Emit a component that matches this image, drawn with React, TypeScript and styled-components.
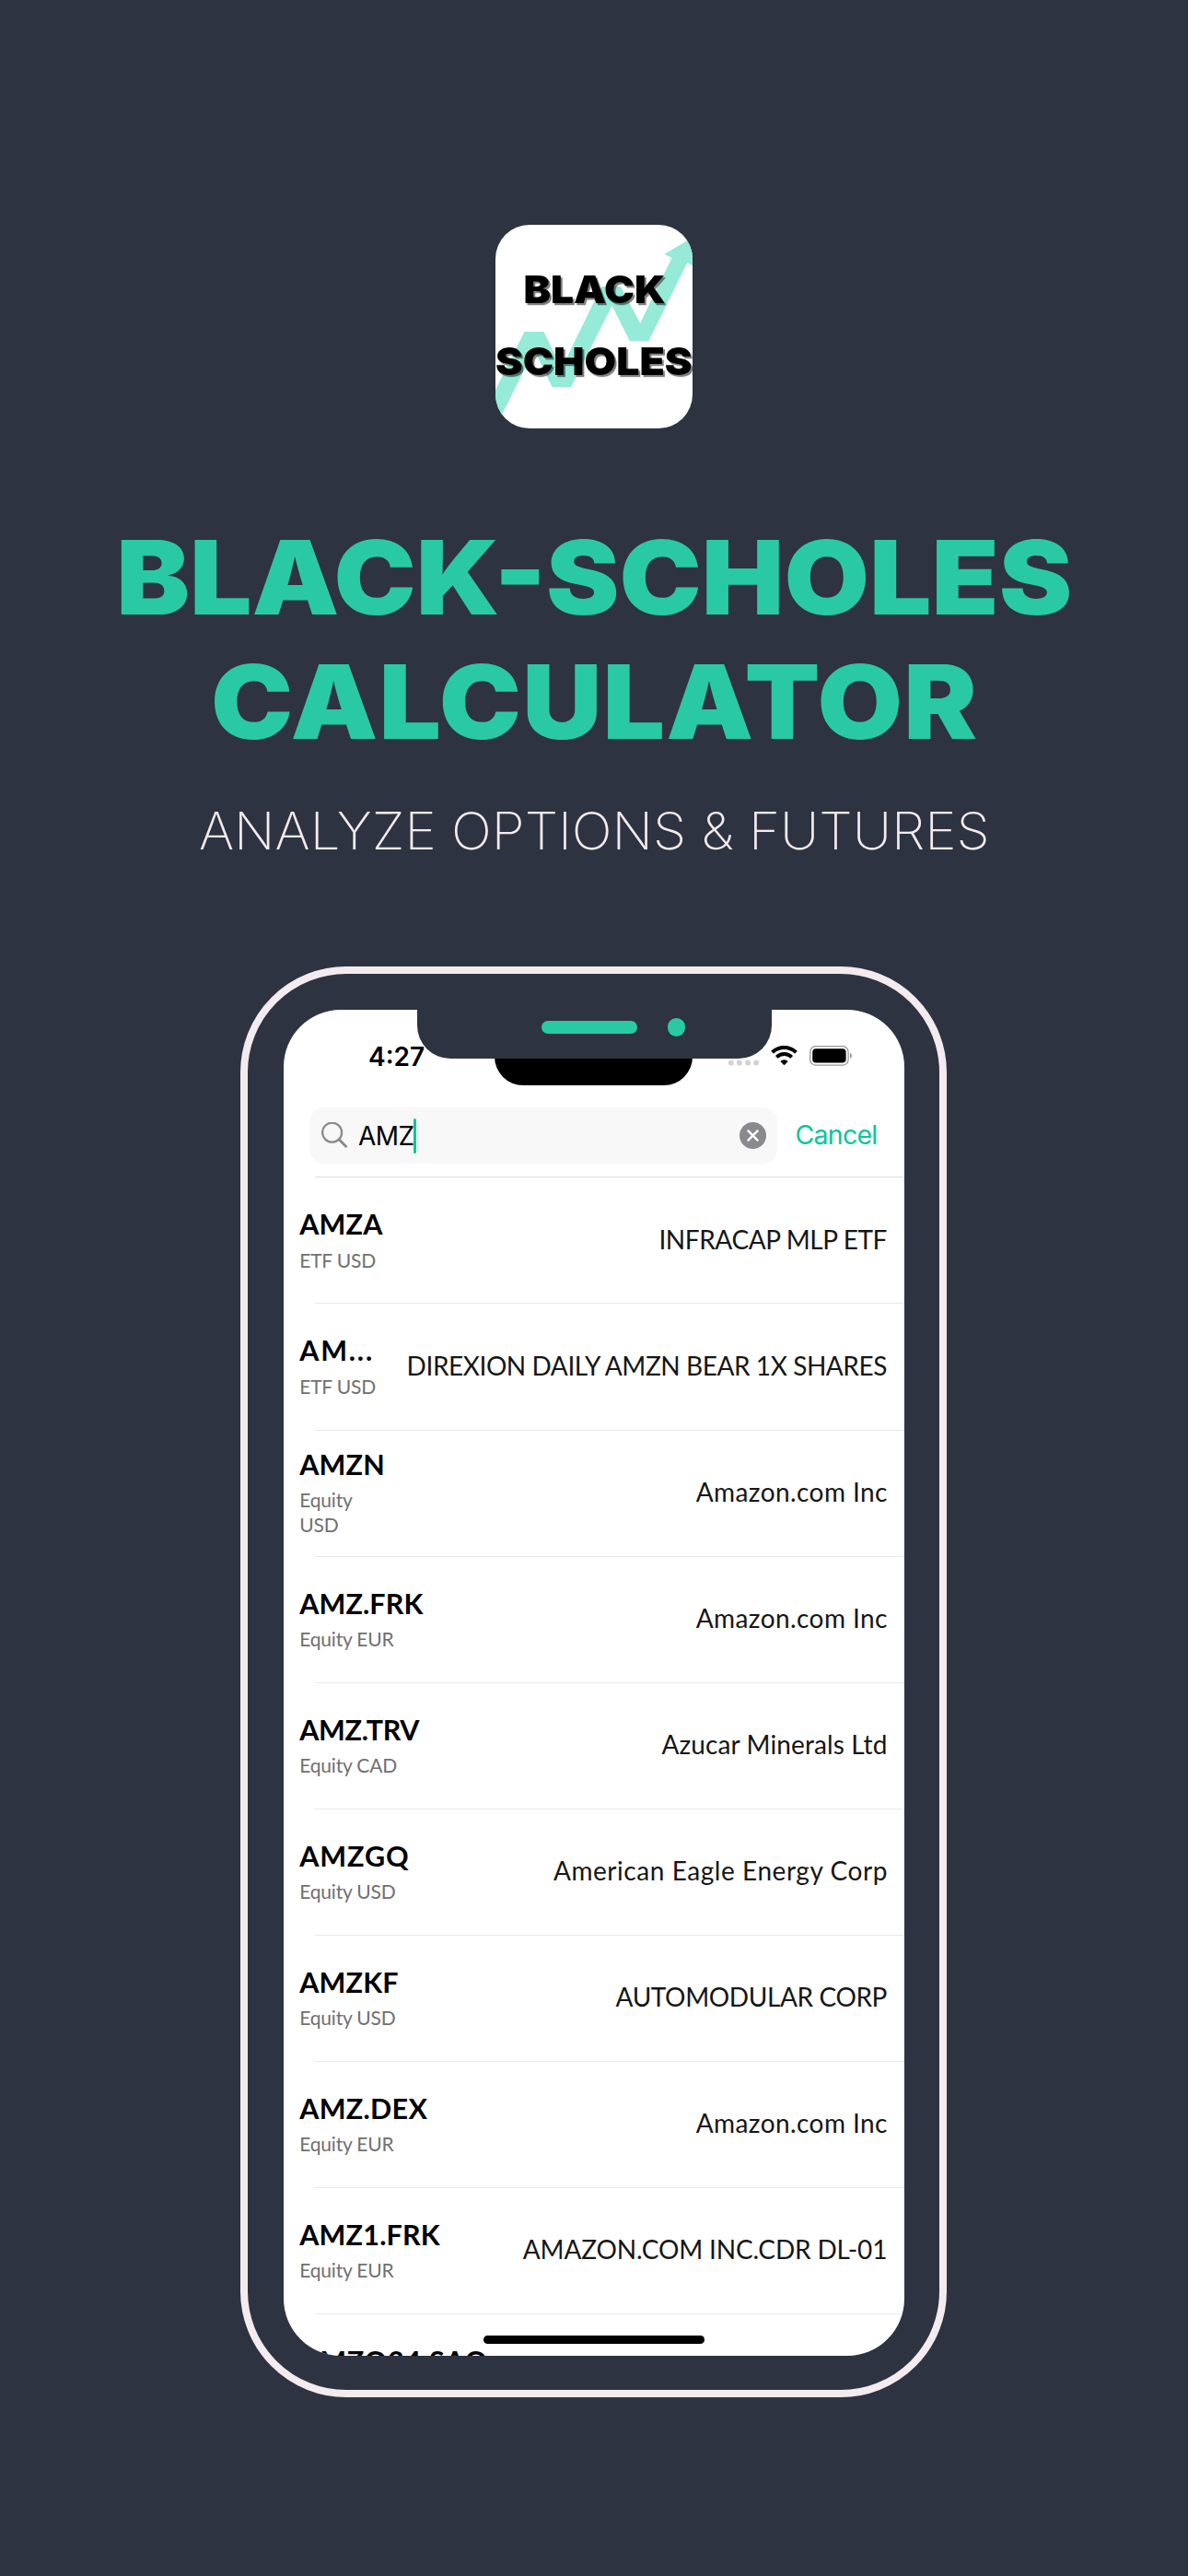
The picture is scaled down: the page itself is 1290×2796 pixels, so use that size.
import React from "react";
import styled, { createGlobalStyle } from "styled-components";

const INK = "#2e3341";
const MINT = "#2ac9a5";
const ACCENT = "#0ac69a";
const DISPLAY = `Inter, "Liberation Sans", sans-serif`;
const BODY = `Lato, "Liberation Sans", sans-serif`;

const GlobalStyle = createGlobalStyle`
  html, body { margin: 0; padding: 0; background: ${INK}; }
  * { box-sizing: border-box; }
`;

const Page = styled.main`
  display: flex;
  flex-direction: column;
  align-items: center;
  width: 1290px;
  height: 2796px;
  padding-top: 244px;
  overflow: hidden;
  background: ${INK};
  font-family: ${DISPLAY};
`;

const AppIcon = styled.svg`
  display: block;
  flex: none;
  width: 213.5px;
  height: 220.5px;
  border-radius: 37px;
  background: #fff;
`;

const Title = styled.h1`
  display: flex;
  flex-direction: column;
  align-items: center;
  margin: 94.5px 0 0 1px;
  color: ${MINT};
  font-size: 111.4px;
  font-weight: 900;
  line-height: 135px;
  white-space: nowrap;
`;

const TitleLine = styled.span<{ $tracking: number }>`
  letter-spacing: ${(p) => p.$tracking}px;
  transform: scaleX(1.072);
`;

const Subtitle = styled.p`
  margin: 39.1px 0 0;
  color: #f4ebee;
  font-size: 55.4px;
  font-weight: 200;
  line-height: 67px;
  white-space: nowrap;
  transform: scaleX(1.049);
`;

const Phone = styled.section`
  flex: none;
  align-self: flex-start;
  display: flex;
  width: 767px;
  height: 1552.5px;
  margin: 114.2px 0 0 261px;
  padding: 39px 38px 36.5px 39px;
  border: 8px solid #f4ebee;
  border-radius: 115px;
`;

const Screen = styled.div`
  position: relative;
  flex: 1;
  display: flex;
  flex-direction: column;
  overflow: hidden;
  border-radius: 62px;
  background: #fff;
`;

const BlackNotch = styled.div`
  position: absolute;
  top: 0;
  left: 229px;
  width: 214.5px;
  height: 82px;
  border-radius: 0 0 31px 31px;
  background: #000;
`;

const Notch = styled.div`
  position: absolute;
  top: -1px;
  left: 145px;
  display: flex;
  align-items: center;
  gap: 33px;
  width: 385.3px;
  height: 53.3px;
  padding: 0 0 14px 135px;
  border-radius: 0 0 36px 36px;
  background: ${INK};
`;

const Speaker = styled.div`
  width: 104px;
  height: 13.3px;
  border-radius: 7px;
  background: ${MINT};
`;

const Camera = styled.div`
  width: 19.3px;
  height: 19.3px;
  border-radius: 50%;
  background: ${MINT};
`;

const StatusBar = styled.header`
  flex: none;
  display: flex;
  align-items: flex-end;
  justify-content: space-between;
  height: 106px;
  padding: 0 56px 45px 92px;
`;

const Clock = styled.span`
  color: #000;
  font-size: 28px;
  font-weight: 600;
  line-height: 20px;
`;

const StatusIcons = styled.svg`
  display: block;
  width: 136px;
  height: 24px;
`;

const SearchRow = styled.div`
  flex: none;
  display: flex;
  align-items: center;
  height: 61px;
  padding-left: 28px;
  gap: 19.5px;
`;

const SearchField = styled.div`
  display: flex;
  align-items: center;
  width: 508px;
  height: 61px;
  padding: 0 12px 0 13px;
  border-radius: 16px;
  background: #f8f8f8;
`;

const FieldIcon = styled.svg`
  display: block;
  flex: none;
  width: 29px;
  height: 29px;
`;

const Query = styled.span`
  margin-left: 11px;
  color: #000;
  font-size: 28px;
  line-height: 38px;
  letter-spacing: -0.5px;
`;

const Caret = styled.span`
  flex: none;
  width: 3px;
  height: 38px;
  margin: 0 auto 0 -0.5px;
  border-radius: 1.5px;
  background: ${ACCENT};
`;

const Cancel = styled.span`
  color: ${ACCENT};
  font-size: 28.5px;
  line-height: 36px;
  letter-spacing: -0.75px;
  padding-bottom: 2px;
`;

const List = styled.div`
  flex: none;
  display: flex;
  flex-direction: column;
  margin-top: 14px;
`;

const Divider = styled.div<{ $tone: string }>`
  flex: none;
  height: 1px;
  margin-left: 34px;
  background: ${(p) => p.$tone};
`;

const Row = styled.div`
  flex: none;
  display: flex;
  align-items: center;
  justify-content: space-between;
  height: 136.12px;
  padding: 0.4px 18.6px 0 17.2px;
  font-family: ${BODY};
  white-space: nowrap;
`;

const Ticker = styled.div`
  display: flex;
  flex-direction: column;
  gap: 8.7px;
`;

const Symbol = styled.span<{ $tracking: number }>`
  color: #000;
  font-size: 30.5px;
  font-weight: 700;
  line-height: 32.6px;
  letter-spacing: ${(p) => p.$tracking}px;
`;

const Kind = styled.span<{ $narrow?: boolean }>`
  width: ${(p) => (p.$narrow ? "84px" : "auto")};
  white-space: ${(p) => (p.$narrow ? "normal" : "nowrap")};
  color: #707070;
  font-size: 21px;
  line-height: 27.3px;
  letter-spacing: -0.18px;
`;

const Company = styled.span<{ $tracking: number }>`
  padding-bottom: 4px;
  color: #161616;
  font-size: 28px;
  letter-spacing: ${(p) => p.$tracking}px;
  margin-right: ${(p) => -p.$tracking}px;
`;

const HomeIndicator = styled.div`
  position: absolute;
  left: 217px;
  bottom: 13.5px;
  width: 240px;
  height: 8.8px;
  border-radius: 5px;
  background: #000;
`;

const LogoWord = styled.text`
  font-family: ${DISPLAY};
  font-weight: 900;
  font-size: 41.8px;
  fill: #000;
`;

type Quote = {
  symbol: string;
  kind: string;
  company: string;
  symbolTracking?: number;
  companyTracking?: number;
  narrow?: boolean;
};

const quotes: Quote[] = [
  { symbol: "AMZA", kind: "ETF USD", company: "INFRACAP MLP ETF", symbolTracking: 0.2, companyTracking: -0.4 },
  { symbol: "AM...", kind: "ETF USD", company: "DIREXION DAILY AMZN BEAR 1X SHARES", symbolTracking: 1.8, companyTracking: -0.43 },
  { symbol: "AMZN", kind: "Equity USD", company: "Amazon.com Inc", symbolTracking: 0.2, companyTracking: 0.42, narrow: true },
  { symbol: "AMZ.FRK", kind: "Equity EUR", company: "Amazon.com Inc", symbolTracking: 0.1, companyTracking: 0.42 },
  { symbol: "AMZ.TRV", kind: "Equity CAD", company: "Azucar Minerals Ltd", symbolTracking: -0.3, companyTracking: 0.12 },
  { symbol: "AMZGQ", kind: "Equity USD", company: "American Eagle Energy Corp", symbolTracking: 0.9, companyTracking: 0.56 },
  { symbol: "AMZKF", kind: "Equity USD", company: "AUTOMODULAR CORP", symbolTracking: 0.2, companyTracking: -0.38 },
  { symbol: "AMZ.DEX", kind: "Equity EUR", company: "Amazon.com Inc", symbolTracking: 0.3, companyTracking: 0.42 },
  { symbol: "AMZ1.FRK", kind: "Equity EUR", company: "AMAZON.COM INC.CDR DL-01", symbolTracking: 0.2, companyTracking: -0.15 },
  { symbol: "AMZO34.SAO", kind: "", company: "", symbolTracking: 0.8 },
];

function Logo() {
  return (
    <AppIcon viewBox="0 0 213.5 220.5">
      <defs>
        <filter id="drop" x="-10%" y="-10%" width="120%" height="120%">
          <feDropShadow dx="2" dy="2.2" stdDeviation="0.6" floodColor="#000" floodOpacity="0.5" />
        </filter>
      </defs>
      <path
        transform="translate(-18.5 -14) scale(.33333)"
        fill="#95ead8"
        d="M40 611 150 390H213L271 509 401 243H463L527 362 630 150 606 137 710 76 708 180 680 166 555 420H493L435 305 302 570H240L182 450 66 681H40Z"
      />
      <g filter="url(#drop)">
        <LogoWord x="30.5" y="84.8" textLength="154" lengthAdjust="spacingAndGlyphs">BLACK</LogoWord>
        <LogoWord x="0" y="163" textLength="213.5" lengthAdjust="spacingAndGlyphs">SCHOLES</LogoWord>
      </g>
    </AppIcon>
  );
}

function Status() {
  return (
    <StatusIcons viewBox="0 0 136 24">
      <g fill="#d3d3d3">
        {[0, 9, 18.2, 27.3].map((x) => (
          <rect key={x} x={1 + x} y="17.8" width="5.8" height="5.8" rx="2" />
        ))}
      </g>
      <g transform="translate(47 2)">
        <path d="M1.6 7.3A18.6 18.6 0 0 1 27.4 7.3" fill="none" stroke="#000" strokeWidth="4" />
        <path d="M6.3 12.4A11.8 11.8 0 0 1 22.7 12.4" fill="none" stroke="#000" strokeWidth="4" />
        <path d="M14.5 21.3 10.3 17A6 6 0 0 1 18.7 17Z" fill="#000" />
      </g>
      <rect x="89.7" y="2.7" width="41.4" height="20.4" rx="6" fill="none" stroke="#999" strokeWidth="1.3" />
      <rect x="92.2" y="5.2" width="36.4" height="15.4" rx="3.8" fill="#000" />
      <path d="M133 9.8C135.6 10.6 135.6 15.2 133 16Z" fill="#999" />
    </StatusIcons>
  );
}

export default function App() {
  return (
    <Page>
      <GlobalStyle />
      <Logo />
      <Title>
        <TitleLine $tracking={0}>BLACK-SCHOLES</TitleLine>
        <TitleLine $tracking={1.1}>CALCULATOR</TitleLine>
      </Title>
      <Subtitle>ANALYZE OPTIONS &amp; FUTURES</Subtitle>
      <Phone>
        <Screen>
          <StatusBar>
            <Clock>4:27</Clock>
            <Status />
          </StatusBar>
          <SearchRow>
            <SearchField>
              <FieldIcon viewBox="0 0 29 29" fill="none" stroke="#8a898e" strokeLinecap="round">
                <circle cx="11.6" cy="11.2" r="10.5" strokeWidth="2.3" />
                <path d="M19.3 19 26.6 26.2" strokeWidth="2.9" />
              </FieldIcon>
              <Query>AMZ</Query>
              <Caret />
              <FieldIcon viewBox="0 0 29 29">
                <circle cx="14.5" cy="14.5" r="14.5" fill="#8a898e" />
                <path d="M9.4 9.4 19.6 19.6M19.6 9.4 9.4 19.6" stroke="#fff" strokeWidth="2.4" strokeLinecap="round" />
              </FieldIcon>
            </SearchField>
            <Cancel>Cancel</Cancel>
          </SearchRow>
          <List>
            <Divider $tone="#dedee0" />
            {quotes.map((q) => (
              <React.Fragment key={q.symbol}>
                <Row>
                  <Ticker>
                    <Symbol $tracking={q.symbolTracking ?? 0}>{q.symbol}</Symbol>
                    <Kind $narrow={q.narrow}>{q.kind || "\u00a0"}</Kind>
                  </Ticker>
                  <Company $tracking={q.companyTracking ?? 0}>{q.company}</Company>
                </Row>
                <Divider $tone="#e9e9e9" />
              </React.Fragment>
            ))}
          </List>
          <BlackNotch />
          <Notch>
            <Speaker />
            <Camera />
          </Notch>
          <HomeIndicator />
        </Screen>
      </Phone>
    </Page>
  );
}
